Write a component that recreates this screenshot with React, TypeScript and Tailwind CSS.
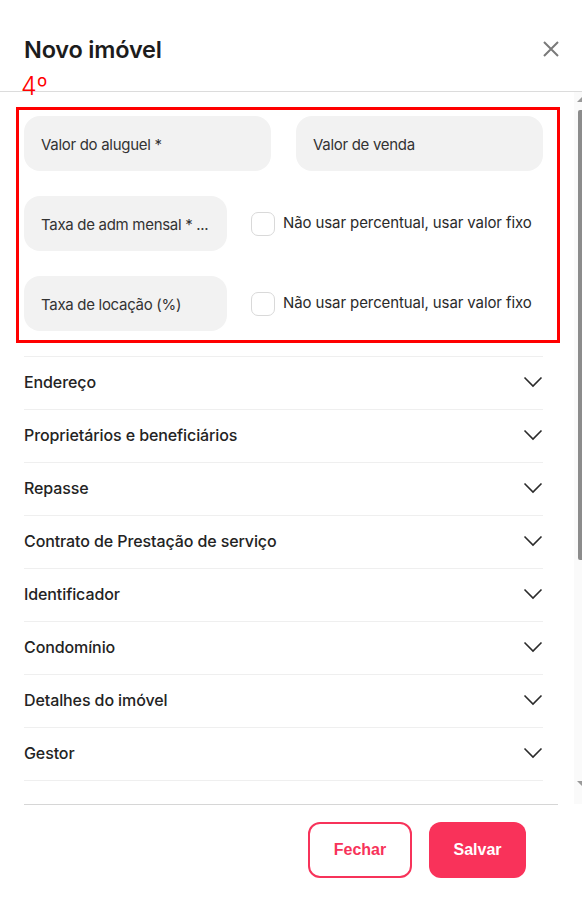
const SECTIONS = [
  "Endereço",
  "Proprietários e beneficiários",
  "Repasse",
  "Contrato de Prestação de serviço",
  "Identificador",
  "Condomínio",
  "Detalhes do imóvel",
  "Gestor",
];

function Chevron() {
  return (
    <svg width="20" height="12" viewBox="0 0 20 12" fill="none">
      <path d="M1.5 1.5 L10 10 L18.5 1.5" stroke="#2b2b2b" strokeWidth="1.6" />
    </svg>
  );
}

function Field({ label, className }: { label: string; className: string }) {
  return (
    <div
      className={`flex h-[55px] items-center whitespace-nowrap rounded-[16px] bg-[#f2f2f2] px-[17px] pt-[3px] text-[15px] tracking-[-0.3px] text-[#333] ${className}`}
    >
      {label}
    </div>
  );
}

function FixedCheck() {
  return (
    <label className="flex items-center gap-[8px] whitespace-nowrap text-[15px] tracking-[-0.1px] text-[#2a2a2a]">
      <span className="h-[24px] w-[24px] rounded-[7px] border border-[#d9d9d9] bg-white" />
      Não usar percentual, usar valor fixo
    </label>
  );
}

export default function App() {
  return (
    <div
      className="flex h-[902px] w-[582px] flex-col bg-white"
      style={{ fontFamily: "Inter, 'Noto Sans', sans-serif" }}
    >
      {/* Header */}
      <header className="relative flex h-[92px] shrink-0 items-start justify-between border-b border-[#dcdcdc] px-[24px] pt-[35px]">
        <h1 className="text-[23.5px] font-semibold leading-[30px] tracking-[-0.2px] text-[#1c1c1c]">
          Novo imóvel
        </h1>
        <button className="mr-[-1px] mt-[6px]">
          <svg width="16" height="16" viewBox="0 0 16 16">
            <path d="M1 1 L15 15 M15 1 L1 15" stroke="#7a7a7a" strokeWidth="2" />
          </svg>
        </button>
        <span className="absolute left-[21px] top-[71px] text-[25px] font-light leading-[30px] text-[#ff0000]">
          4º
        </span>
      </header>

      {/* Body */}
      <div className="flex min-h-0 flex-1">
        <div className="flex-1">
          <div className="relative px-[24px] pt-[24px]">
            <div className="pointer-events-none absolute left-[16px] top-[15px] h-[236px] w-[544px] border-[3px] border-[#ff0000]" />
            <div className="flex flex-col gap-[25px] pr-[7px]">
              <div className="flex gap-[25px]">
                <Field label="Valor do aluguel *" className="w-[247px]" />
                <Field label="Valor de venda" className="w-[247px]" />
              </div>
              <div className="flex items-center gap-[24px]">
                <Field label="Taxa de adm mensal * ..." className="w-[203px]" />
                <FixedCheck />
              </div>
              <div className="flex items-center gap-[24px]">
                <Field label="Taxa de locação (%)" className="w-[203px]" />
                <FixedCheck />
              </div>
            </div>

            <div className="mr-[7px] mt-[25px] border-b border-[#efefef]">
              {SECTIONS.map((s) => (
                <div
                  key={s}
                  className="flex h-[53px] items-center justify-between border-t border-[#efefef] pb-[3px] text-[16px] font-medium tracking-[-0.1px] text-[#232323]"
                >
                  {s}
                  <Chevron />
                </div>
              ))}
            </div>
          </div>
        </div>

        {/* Scrollbar */}
        <div className="flex w-[8px] flex-col items-end bg-[#fafafa] pb-[18px] pt-[5px]">
          <svg width="5" height="5" viewBox="0 0 5 5" className="mb-[8px]">
            <path d="M0 5 L5 0 L5 5 Z" fill="#9a9a9a" />
          </svg>
          <div className="h-[450px] w-[4px] rounded-l-[2px] bg-[#8c8c8c]" />
          <div className="flex-1" />
          <svg width="5" height="5" viewBox="0 0 5 5">
            <path d="M0 0 L5 0 L5 5 Z" fill="#9a9a9a" />
          </svg>
        </div>
      </div>

      {/* Footer */}
      <footer className="mx-[24px] flex h-[98px] shrink-0 items-start justify-end gap-[17px] border-t border-[#d6d6d6] pr-[32px] pt-[17px]">
        <button
          className="h-[56px] w-[104px] rounded-[12px] border-2 border-[#f7335a] text-[16px] font-bold text-[#f7335a]"
          style={{ fontFamily: "'Liberation Sans', Arial, sans-serif" }}
        >
          Fechar
        </button>
        <button
          className="h-[56px] w-[97px] rounded-[12px] bg-[#f9325a] text-[16px] font-bold text-white"
          style={{ fontFamily: "'Liberation Sans', Arial, sans-serif" }}
        >
          Salvar
        </button>
      </footer>
    </div>
  );
}
